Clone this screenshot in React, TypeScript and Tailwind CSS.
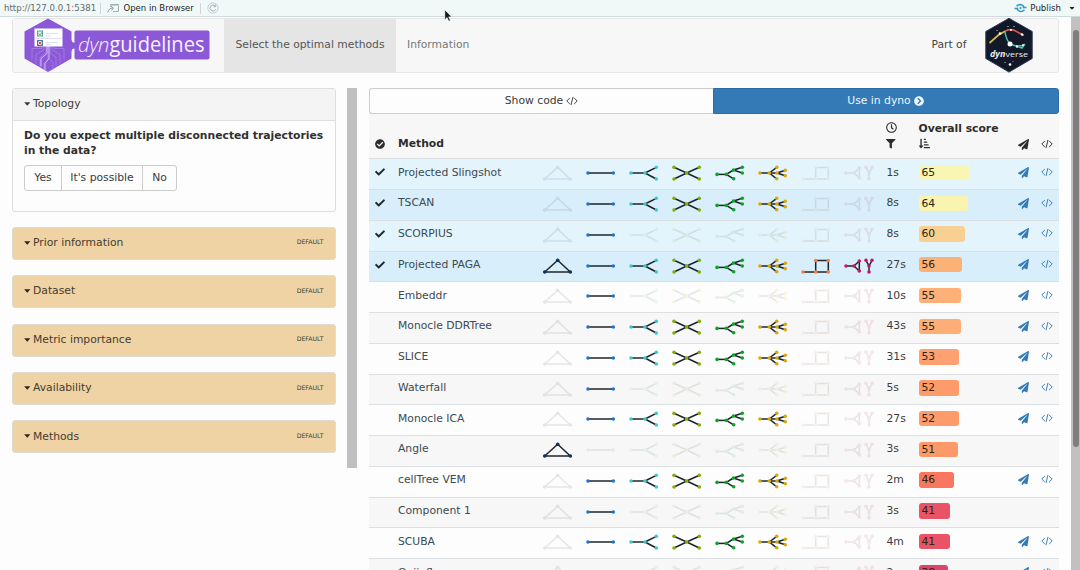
import React from "react";
import {
  FaCaretDown,
  FaCheck,
  FaCheckCircle,
  FaChevronCircleRight,
  FaFilter,
  FaPaperPlane,
  FaRegClock,
  FaSortAmountDownAlt,
} from "react-icons/fa";

type Point = [number, number];
type Shape = { color: string; points: Point[]; edges: [number, number][] };

const shapes: Shape[] = [
  { color: "#08325c", points: [[8.7, 16], [21.7, 4.3], [34.3, 16]], edges: [[0, 1], [1, 2], [2, 0]] },
  { color: "#1c76cc", points: [[9, 10], [34.3, 10]], edges: [[0, 1]] },
  { color: "#3fc8cc", points: [[9, 10], [23, 10], [34.3, 4.3], [34.3, 16]], edges: [[0, 1], [1, 2], [1, 3]] },
  { color: "#84ac08", points: [[9, 4.3], [34.3, 16], [9, 16], [34.3, 4.3], [21.7, 10]], edges: [[0, 4], [1, 4], [2, 4], [3, 4]] },
  { color: "#0ea428", points: [[9, 11.4], [18.3, 11.4], [25.7, 15.8], [25.5, 7], [34.3, 4.3], [34.3, 10]], edges: [[0, 1], [1, 2], [1, 3], [3, 4], [3, 5]] },
  { color: "#dba60b", points: [[9, 10], [18.3, 10], [25.7, 4.3], [25.7, 15.8], [26, 10], [34.3, 7.2], [34.3, 12.8]], edges: [[0, 1], [1, 2], [1, 3], [1, 4], [4, 5], [4, 6]] },
  { color: "#ee843f", points: [[9, 16], [21.7, 16], [34.3, 16], [34.3, 4.5], [21.7, 4.5]], edges: [[0, 1], [1, 2], [2, 3], [3, 4], [4, 1]] },
  { color: "#c8165f", points: [[9, 10], [17, 10], [22.3, 5], [22.3, 15], [29, 4.3], [35, 4.3], [32, 10], [32, 16]], edges: [[0, 1], [1, 2], [2, 3], [3, 1], [4, 6], [5, 6], [6, 7]] },
];

function Trajectory({ shape, on }: { shape: Shape; on: boolean }) {
  return (
    <svg viewBox="0 0 43 20" className={"block h-5 w-[43px] shrink-0 " + (on ? "" : "opacity-10")}>
      {shape.edges.map(([a, b], i) => (
        <line
          key={i}
          x1={shape.points[a][0]}
          y1={shape.points[a][1]}
          x2={shape.points[b][0]}
          y2={shape.points[b][1]}
          stroke="#1c2429"
          strokeWidth="1.5"
        />
      ))}
      {shape.points.map(([x, y], i) => (
        <circle key={i} cx={x} cy={y} r="1.8" fill={shape.color} />
      ))}
    </svg>
  );
}

function CodeIcon({ className }: { className?: string }) {
  return (
    <svg viewBox="0 0 12 10" fill="none" stroke="currentColor" className={className}>
      <path d="M3.600 2.200 .8 5l2.800 2.800M8.400 2.200 11.200 5 8.400 7.800M6.900 1.300 5.100 8.700" strokeWidth="0.95" strokeLinecap="round" strokeLinejoin="round" />
    </svg>
  );
}

type Row = { name: string; mask: string; time: string; score: number; color: string; selected?: boolean; links: boolean };

const rows: Row[] = [
  { name: "Projected Slingshot", mask: "01111100", time: "1s", score: 65, color: "#f9f5b3", selected: true, links: true },
  { name: "TSCAN", mask: "01111100", time: "8s", score: 64, color: "#f9f4b0", selected: true, links: true },
  { name: "SCORPIUS", mask: "01000000", time: "8s", score: 60, color: "#f8d192", selected: true, links: true },
  { name: "Projected PAGA", mask: "11111111", time: "27s", score: 56, color: "#fcb276", selected: true, links: true },
  { name: "Embeddr", mask: "01000000", time: "10s", score: 55, color: "#fdb077", links: true },
  { name: "Monocle DDRTree", mask: "01111100", time: "43s", score: 55, color: "#fdae76", links: true },
  { name: "SLICE", mask: "01111100", time: "31s", score: 53, color: "#fda172", links: true },
  { name: "Waterfall", mask: "01000000", time: "5s", score: 52, color: "#fd9b6b", links: true },
  { name: "Monocle ICA", mask: "01111100", time: "27s", score: 52, color: "#fd9b6b", links: true },
  { name: "Angle", mask: "10000000", time: "3s", score: 51, color: "#fd9868", links: false },
  { name: "cellTree VEM", mask: "01111100", time: "2m", score: 46, color: "#f8775e", links: true },
  { name: "Component 1", mask: "01000000", time: "3s", score: 41, color: "#ea5265", links: false },
  { name: "SCUBA", mask: "01111100", time: "4m", score: 41, color: "#ea5265", links: true },
  { name: "Ouijaflow", mask: "01000000", time: "2m", score: 38, color: "#d9456d", links: true },
];

function rowBackground(selected: boolean | undefined, index: number) {
  if (selected) return index % 2 ? "bg-[#d8eefb]" : "bg-[#e3f4fd]";
  return index % 2 ? "bg-[#f7f7f7]" : "bg-[#fdfdfd]";
}

function MethodRow({ row, index }: { row: Row; index: number }) {
  return (
    <div className={"flex h-[30.77px] shrink-0 border-t border-[#dcdfe1] " + rowBackground(row.selected, index)}>
      <div className="w-[29px] shrink-0 pt-[8px] pl-[6px] text-[10px] text-[#1e2a30]">{row.selected && <FaCheck />}</div>
      <div className="w-[138px] shrink-0 pt-[5.250px] text-[#3c4a52]">{row.name}</div>
      <div className="flex w-[344px] shrink-0 pt-[4px]">
        {shapes.map((s, i) => (
          <Trajectory key={i} shape={s} on={row.mask[i] === "1"} />
        ))}
      </div>
      <div className="ml-[6.5px] w-8 shrink-0 pt-[5.250px]">{row.time}</div>
      <div className="w-[99px] shrink-0 pt-[5.5px] text-[#2b2410]">
        <div className="h-[15.4px] rounded-[3px] pl-[3px] leading-[15px]" style={{ width: row.score * 0.77, backgroundColor: row.color }}>
          {row.score}
        </div>
      </div>
      {row.links && (
        <div className="flex pt-[7.500px] text-[#337ab7]">
          <FaPaperPlane className="ml-[0.500px] text-[11px]" />
          <CodeIcon className="ml-[12px] h-[10px] w-3" />
        </div>
      )}
    </div>
  );
}

function GuidelinesLogo() {
  return (
    <svg viewBox="0 0 190 56" className="h-[56px] w-[190px] -translate-y-[0.5px]">
      <path d="M24 1 47.500 14v27L24 54.500 .5 41V14Z" fill="#8b58d8" />
      <g fill="none" stroke="#ab88e4" strokeWidth="0.7">
        <path d="M22 29v6l-6 5v9M20 29v3l-8 5v9M18 29v2H8v11M26 29v6l6 5v9M28 29v3l8 5v9M30 29v2h10v11M24 29v13l-4 4v6M25 41l4 4v7" />
      </g>
      <path d="M23 28v8l-6 5v8M25 28v13l-4 5v7" fill="none" stroke="#e4d9f5" strokeWidth="0.8" />
      <rect x="10.500" y="11" width="28" height="18" fill="#fff" />
      <path d="M22 16h12M22 25h12M22 18.500h5M22 27h5" stroke="#c6d3e4" strokeWidth="0.7" />
      <path d="M11 21h27" stroke="#ddd3ef" strokeWidth="0.8" />
      <rect x="13.500" y="13.500" width="5" height="5" fill="#d7f0eb" stroke="#42a8b2" />
      <path d="m14.500 16 1.500 1.500 2.500-3" fill="none" stroke="#62a84b" />
      <rect x="13.500" y="23" width="5" height="5" fill="#f6dada" stroke="#4a7ba7" />
      <path d="m14.500 24 3 3m0-3-3 3" stroke="#c7485c" />
      <path d="M47 22q2 5 5 2v8q-3-3-5 2Z" fill="#8b58d8" />
      <rect x="50.500" y="13" width="135" height="29" rx="2" fill="#8b58d8" />
      <text x="54" y="34" fontFamily="Open Sans" fontSize="21" fill="#f7f2ff" textLength="126.500" lengthAdjust="spacingAndGlyphs">
        <tspan fontStyle="italic" fontWeight="300">dyn</tspan>
        <tspan fontWeight="500">guidelines</tspan>
      </text>
    </svg>
  );
}

function DynverseLogo() {
  return (
    <svg viewBox="0 0 48 56" className="h-[56px] w-12 -translate-y-[0.500px]">
      <path d="M24 .8 47.200 14v27L24 54.600 .8 41V14Z" fill="#121827" stroke="#2c3b52" />
      <path d="m4.500 25.500 9-8 7-4" fill="none" stroke="#dfb849" strokeWidth="1.700" />
      <path d="M20.500 13.500q6-3 11 .5l7.500 4" fill="none" stroke="#d95550" strokeWidth="1.600" />
      <path d="M20 14q1 8 5 12.500l6 2 8-.5M31 28.500l6 2 3-4" fill="none" stroke="#53bca8" strokeWidth="1.500" />
      <g fill="#fff">
        <circle cx="25" cy="26.500" r="2.500" />
        <circle cx="15" cy="16" r="1.300" />
        <circle cx="26" cy="12.500" r="1" />
        <circle cx="37" cy="17" r="1.200" />
        <circle cx="32" cy="29" r="1.200" />
        <circle cx="38" cy="27.500" r="1" />
        <circle cx="25" cy="47" r="1.300" />
        <circle cx="28" cy="44" r=".6" fill="#a58fe0" />
        <circle cx="20" cy="45" r=".5" />
        <circle cx="23" cy="9" r=".6" />
        <circle cx="29" cy="9" r=".6" />
        <circle cx="12" cy="13" r=".5" />
      </g>
      <text x="5" y="39" fontFamily="Open Sans" fontSize="8" fill="#e8edf5" textLength="38" lengthAdjust="spacingAndGlyphs">
        <tspan fontStyle="italic" fontWeight="700">dyn</tspan>
        <tspan>verse</tspan>
      </text>
    </svg>
  );
}

function Toolbar() {
  return (
    <div className="flex h-[17px] shrink-0 items-center border-b border-[#d2d9dc] bg-[#f0f8f8] text-[8.600px] leading-4 text-[#1f2426]">
      <span className="ml-[4px] w-[96px] text-[#656b6d]">http://127.0.0.1:5381</span>
      <span className="h-[11px] w-px bg-[#cfd6d8]" />
      <svg viewBox="0 0 13 11" className="ml-[5.500px] h-[11px] w-[13px]" fill="none" stroke="#a3aeb3">
        <path d="M3.500 4V1.500h8v7H6" />
        <path d="M3.500 2.500h8" stroke="#c8d0d3" />
        <path d="M.8 9.500q1-4.500 5-4.500M4 3.500 6.500 5 4.500 7.500" stroke="#8f9ca3" />
      </svg>
      <span className="ml-[4px] w-[76px] text-[8.500px]">Open in Browser</span>
      <span className="h-[11px] w-px bg-[#cfd6d8]" />
      <svg viewBox="0 0 12 12" className="ml-[6px] h-3 w-3" fill="none" stroke="#a9b3b7">
        <circle cx="6" cy="6" r="5.200" stroke="#c5ced1" />
        <path d="M8.700 7.500a3 3 0 1 1-.4-3.500M8.700 2.500v2.200H6.500" />
      </svg>
      <svg viewBox="0 0 13 10" className="ml-auto h-[10px] w-[13px]" fill="none" stroke="#2e98c7" strokeWidth="1.500">
        <path d="M2.500 3.200q3.500-3.600 7 0v2M10.500 6.800q-3.500 3.600-7 0v-2" />
        <circle cx="6.500" cy="5" r="1.100" fill="#2e98c7" stroke="none" />
        <path d="M9.500 4.500h3M.5 5.500h3" />
      </svg>
      <span className="ml-[3px]">Publish</span>
      <FaCaretDown className="mr-[4px] ml-[7px] text-[8px]" />
    </div>
  );
}

function Caret({ className }: { className?: string }) {
  return (
    <svg viewBox="0 0 7 4" className={"mr-[2.500px] ml-[0.500px] h-[4px] w-[6.500px] " + (className ?? "")} fill="currentColor">
      <path d="M.2 0h6.600L3.500 4Z" />
    </svg>
  );
}

function Panel({ title }: { title: string }) {
  return (
    <div className="flex h-[33px] shrink-0 items-center justify-between rounded-[3px] border border-[#dedbd5] bg-[#efd3a5] pr-[11px] pl-[11px] text-[#453c2f]">
      <span className="flex items-center pb-[1.250px]">
        <Caret className="text-[#2b251c]" />
        {title}
      </span>
      <span className="pb-[2.500px] text-[6.2px]">DEFAULT</span>
    </div>
  );
}

export default function App() {
  return (
    <div className="relative flex h-[570px] w-[1080px] flex-col overflow-hidden bg-[#fdfdfd] font-['DejaVu_Sans',sans-serif] text-[10.77px] leading-[15.4px] text-[#3b3b3b]">
      <Toolbar />
      <div className="flex min-h-0 flex-1">
        <div className="flex min-w-0 flex-1 flex-col pl-[11.5px]">
          <nav className="mt-px mr-[12px] flex h-[55px] shrink-0 items-center rounded-[3px] border border-[#e6e6e6] bg-[#f7f7f7] pl-[11px] text-[#777]">
            <GuidelinesLogo />
            <div className="ml-[10.5px] flex h-full w-[172px] items-center justify-center bg-[#e5e5e5] pb-[1.500px] text-[#555]">Select the optimal methods</div>
            <span className="ml-[11px] pb-[1.500px]">Information</span>
            <span className="mr-[18px] ml-auto pb-[1.500px] text-[#444]">Part of</span>
            <span className="mr-[25px] h-[56px]"><DynverseLogo /></span>
          </nav>
          <div className="flex min-h-0 flex-1 pt-[15px]">
            <aside className="flex w-[324px] shrink-0 flex-col gap-[15.4px]">
              <section className="h-[123.500px] shrink-0 rounded-[3px] border border-[#dedede]">
                <div className="flex h-[32px] items-center border-b border-[#dedede] bg-[#f4f4f4] pb-px pl-[11px]">
                  <Caret />
                  Topology
                </div>
                <div className="pt-[7px] pl-[11.500px]">
                  <p className="font-bold text-[#303030]">
                    Do you expect multiple disconnected trajectories
                    <br />
                    in the data?
                  </p>
                  <div className="mt-[6px] flex h-[26px] w-[153px] items-stretch divide-x divide-[#ccc] rounded-[3px] border border-[#ccc]">
                    <span className="flex w-[37px] items-center justify-center">Yes</span>
                    <span className="flex flex-1 items-center justify-center">It's possible</span>
                    <span className="flex w-[33px] items-center justify-center">No</span>
                  </div>
                </div>
              </section>
              <Panel title="Prior information" />
              <Panel title="Dataset" />
              <Panel title="Metric importance" />
              <Panel title="Availability" />
              <Panel title="Methods" />
            </aside>
            <div className="ml-[11.5px] h-[380px] w-[10px] shrink-0 bg-[#c0c0c0]" />
            <main className="ml-[12px] flex w-[690px] shrink-0 flex-col overflow-hidden">
              <div className="flex h-[26px] shrink-0">
                <div className="flex w-[344px] items-center justify-center rounded-l-[3px] border border-r-0 border-[#ccc]">
                  Show code <CodeIcon className="ml-[3px] h-[10px] w-3" />
                </div>
                <div className="flex flex-1 items-center justify-center rounded-r-[3px] border border-[#2e6da4] bg-[#337ab7] pr-px text-[#eef6fc]">
                  Use in dyno <FaChevronCircleRight className="ml-[3px] text-[10px]" />
                </div>
              </div>
              <div className="flex h-[44.3px] shrink-0 bg-[#f8f7f7] text-[#2d2d2d]">
                <FaCheckCircle className="mt-[24.500px] ml-[6px] text-[10px]" />
                <div className="mt-[22px] ml-[13px] w-[488px] font-bold">Method</div>
                <div className="w-8 pt-[8px]">
                  <FaRegClock className="text-[11px]" />
                  <FaFilter className="mt-[6px] text-[9.500px]" />
                </div>
                <div className="w-[99px] pt-[6.500px] pl-[0.500px] font-bold">
                  Overall score
                  <FaSortAmountDownAlt className="mt-[2px] text-[11px]" />
                </div>
                <FaPaperPlane className="mt-[24.500px] ml-[1px] text-[11px]" />
                <CodeIcon className="mt-[25px] ml-[12px] h-[10px] w-3" />
              </div>
              {rows.map((r, i) => (
                <MethodRow key={r.name} row={r} index={i} />
              ))}
            </main>
          </div>
        </div>
        <div className="w-[9.500px] shrink-0 bg-[#c1c1c1] pt-[13px] pl-[2.500px]">
          <div className="h-[417px] w-[6px] rounded-[3px] bg-[#7e7e7e]" />
        </div>
      </div>
      <svg viewBox="0 0 9 13" className="absolute top-[8.500px] left-[444px] h-[13px] w-[9px]">
        <path d="M.8.8v10l2.300-2.200 1.700 3.700 1.600-.7-1.700-3.700h3Z" fill="#16191a" stroke="#fff" strokeWidth=".6" />
      </svg>
    </div>
  );
}
